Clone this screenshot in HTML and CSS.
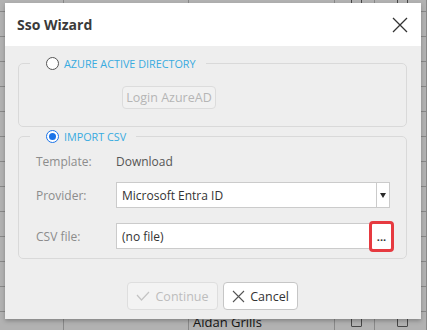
FILE: index.html
```html
<!DOCTYPE html>
<html lang="en">

<head>
	<meta charset="UTF-8">
	<title>Sso Wizard</title>
	<link rel="stylesheet" href="styles.css">
</head>

<body>
	<div class="grid">
		<div class="row"><span class="c1"></span><span class="c2"></span><span class="c3"></span><span class="c4"><i class="box"></i></span><span class="c5"><i class="box"></i></span></div>
		<div class="row"><span class="c1"></span><span class="c2"></span><span class="c3"></span><span class="c4"><i class="box"></i></span><span class="c5"><i class="box"></i></span></div>
		<div class="row"><span class="c1"></span><span class="c2"></span><span class="c3"></span><span class="c4"><i class="box"></i></span><span class="c5"><i class="box"></i></span></div>
		<div class="row"><span class="c1"></span><span class="c2"></span><span class="c3"></span><span class="c4"><i class="box"></i></span><span class="c5"><i class="box"></i></span></div>
		<div class="row"><span class="c1"></span><span class="c2"></span><span class="c3"></span><span class="c4"><i class="box"></i></span><span class="c5"><i class="box"></i></span></div>
		<div class="row"><span class="c1"></span><span class="c2"></span><span class="c3"></span><span class="c4"><i class="box"></i></span><span class="c5"><i class="box"></i></span></div>
		<div class="row"><span class="c1"></span><span class="c2"></span><span class="c3"></span><span class="c4"><i class="box"></i></span><span class="c5"><i class="box"></i></span></div>
		<div class="row"><span class="c1"></span><span class="c2"></span><span class="c3"></span><span class="c4"><i class="box"></i></span><span class="c5"><i class="box"></i></span></div>
		<div class="row"><span class="c1"></span><span class="c2"></span><span class="c3"></span><span class="c4"><i class="box"></i></span><span class="c5"><i class="box"></i></span></div>
		<div class="row"><span class="c1"></span><span class="c2"></span><span class="c3"></span><span class="c4"><i class="box"></i></span><span class="c5"><i class="box"></i></span></div>
		<div class="row"><span class="c1"></span><span class="c2"></span><span class="c3"></span><span class="c4"><i class="box"></i></span><span class="c5"><i class="box"></i></span></div>
		<div class="row"><span class="c1"></span><span class="c2"></span><span class="c3"></span><span class="c4"><i class="box"></i></span><span class="c5"><i class="box"></i></span></div>
		<div class="row"><span class="c1"></span><span class="c2"></span><span class="c3"></span><span class="c4"><i class="box"></i></span><span class="c5"><i class="box"></i></span></div>
		<div class="row last"><span class="c1"></span><span class="c2"></span><span class="c3">Aidan Grills</span><span class="c4"><i class="box"></i></span><span class="c5"><i class="box"></i></span></div>
	</div>

	<div class="backdrop"></div>

	<div class="dialog">
		<div class="dialog-header">
			<span class="dialog-title">Sso Wizard</span>
			<svg class="close" width="16" height="16" viewBox="0 0 16 16">
				<path d="M1 1 L15 15 M15 1 L1 15" stroke="#333" stroke-width="1.3" fill="none" />
			</svg>
		</div>

		<div class="dialog-body">
			<fieldset class="group group-ad">
				<legend><span class="radio"></span>AZURE ACTIVE DIRECTORY</legend>
				<div class="group-content">
					<button type="button" class="btn btn-login" disabled>Login AzureAD</button>
				</div>
			</fieldset>

			<fieldset class="group group-csv">
				<legend><span class="radio checked"></span>IMPORT CSV</legend>
				<div class="group-content">
					<div class="form-row template-row">
						<label>Template:</label>
						<div class="value">Download</div>
					</div>
					<div class="form-row">
						<label>Provider:</label>
						<div class="select">
							<span class="select-text">Microsoft Entra ID</span>
							<span class="select-arrow"></span>
						</div>
					</div>
					<div class="form-row">
						<label>CSV file:</label>
						<div class="file">
							<span class="file-text">(no file)</span>
							<button type="button" class="browse">...</button>
						</div>
					</div>
				</div>
			</fieldset>

			<div class="button-group">
				<button type="button" class="btn btn-continue" disabled>
					<svg width="14" height="10" viewBox="0 0 14 10">
						<path d="M1 4 L5.5 9 L13 1" stroke="#c4c4c4" stroke-width="1.2" fill="none" />
					</svg>
					Continue
				</button>
				<button type="button" class="btn btn-cancel">
					<svg width="13" height="13" viewBox="0 0 13 13">
						<path d="M1 1 L12 12 M12 1 L1 12" stroke="#555" stroke-width="1.1" fill="none" />
					</svg>
					Cancel
				</button>
			</div>
		</div>
	</div>
</body>

</html>
```

FILE: styles.css
```css
* {
	box-sizing: border-box;
}

body {
	font-family: 'Open Sans', 'Noto Sans', sans-serif;
	font-size: 12px;
	color: #333;
	background-color: #fff;
	width: 427px;
	height: 330px;
	margin: 0;
	position: relative;
	overflow: hidden;
}

/* table behind the dialog */
.grid {
	margin-top: -13px;
}

.row {
	display: flex;
	height: 25px;
	border-bottom: 1px solid #c4c4c4;
}

.row span {
	display: flex;
	align-items: center;
	border-right: 1px solid #c4c4c4;
	padding-left: 4px;
	font-size: 13px;
	color: #222;
}

.row.last span {
	align-items: flex-start;
	padding-top: 4px;
	line-height: 13px;
}

.c1 {
	width: 64px;
}

.c2 {
	width: 125px;
}

.c3 {
	width: 146px;
}

.c4 {
	width: 40px;
	justify-content: center;
}

.c5 {
	flex: 1;
	justify-content: center;
}

.box {
	width: 11px;
	height: 11px;
	border: 1px solid #666;
	background: #fff;
	border-radius: 1px;
}

.backdrop {
	position: absolute;
	inset: 0;
	background: rgba(0, 0, 0, 0.3);
}

/* dialog */
.dialog {
	position: absolute;
	left: 5px;
	top: 3px;
	width: 416px;
	height: 316px;
	background: #eeeeee;
	box-shadow: 0 2px 4px rgba(0, 0, 0, 0.25);
	display: flex;
	flex-direction: column;
}

.dialog-header {
	height: 43px;
	background: #fff;
	display: flex;
	align-items: center;
	justify-content: space-between;
	padding: 0 13px 0 12px;
}

.dialog-title {
	font-size: 14px;
	font-weight: 700;
	color: #3a3a3a;
}

.dialog-body {
	padding: 10px 14px 0 13px;
	display: flex;
	flex-direction: column;
}

.group {
	margin: 0;
	border: 1px solid #d9d9d9;
	border-radius: 5px;
	padding: 0;
}

.group legend {
	margin-left: 11px;
	padding: 0 10px 0 16px;
	font-size: 10.8px;
	color: #38abe0;
	display: flex;
	align-items: center;
	height: 14px;
}

.radio {
	width: 13px;
	height: 13px;
	border: 1px solid #555;
	border-radius: 50%;
	background: #fff;
	margin-right: 5px;
	position: relative;
}

.radio.checked {
	border: 1.5px solid #1a73e8;
}

.radio.checked::after {
	content: '';
	position: absolute;
	inset: 2px;
	border-radius: 50%;
	background: #1a73e8;
}

.group-ad {
	height: 71px;
}

.group-ad .group-content {
	padding: 16px 0 0 103px;
}

.group-csv {
	margin-top: 2px;
	height: 130px;
}

.group-csv .group-content {
	padding: 8px 0 0 17px;
}

.btn {
	font-family: inherit;
	font-size: 12.5px;
	border-radius: 4px;
	background: #fff;
	border: 1px solid #cfcfcf;
	color: #333;
	display: flex;
	align-items: center;
	justify-content: center;
	gap: 5px;
	padding: 0;
}

.btn-login {
	width: 94px;
	height: 23px;
	background: #f1f1f1;
	border-color: #dcdcdc;
	color: #b5b5b5;
}

.form-row {
	display: flex;
	align-items: center;
	height: 26px;
	margin-bottom: 15px;
}

.form-row.template-row {
	height: 20px;
	margin-bottom: 11px;
}

.form-row label {
	width: 80px;
	color: #8c8c8c;
}

.value {
	color: #555;
}

.select {
	width: 274px;
	height: 26px;
	background: #fff;
	border: 1px solid #cbcbcb;
	display: flex;
	align-items: center;
}

.select-text {
	flex: 1;
	padding-left: 5px;
	color: #333;
}

.select-arrow {
	width: 13px;
	height: 100%;
	border-left: 1px solid #cbcbcb;
	position: relative;
}

.select-arrow::after {
	content: '';
	position: absolute;
	left: 3px;
	top: 10px;
	border-left: 3.5px solid transparent;
	border-right: 3.5px solid transparent;
	border-top: 5px solid #2a2a2a;
}

.file {
	display: flex;
	align-items: center;
}

.file-text {
	width: 253px;
	height: 26px;
	background: #fff;
	border: 1px solid #cbcbcb;
	border-right: none;
	padding-left: 5px;
	display: flex;
	align-items: center;
}

.browse {
	width: 25px;
	height: 31px;
	border: 3px solid #e63a40;
	border-radius: 4px;
	background: #fff;
	font-family: inherit;
	font-size: 11px;
	font-weight: 700;
	color: #333;
	padding: 2px 0 0;
	line-height: 18px;
}

.button-group {
	display: flex;
	justify-content: center;
	gap: 5px;
	margin-top: 23px;
}

.btn-continue,
.btn-cancel {
	height: 28px;
}

.btn-continue {
	width: 91px;
	background: #f3f3f3;
	border-color: #dedede;
	color: #bdbdbd;
}

.btn-cancel {
	width: 75px;
	border-color: #c6c6c6;
}
```
